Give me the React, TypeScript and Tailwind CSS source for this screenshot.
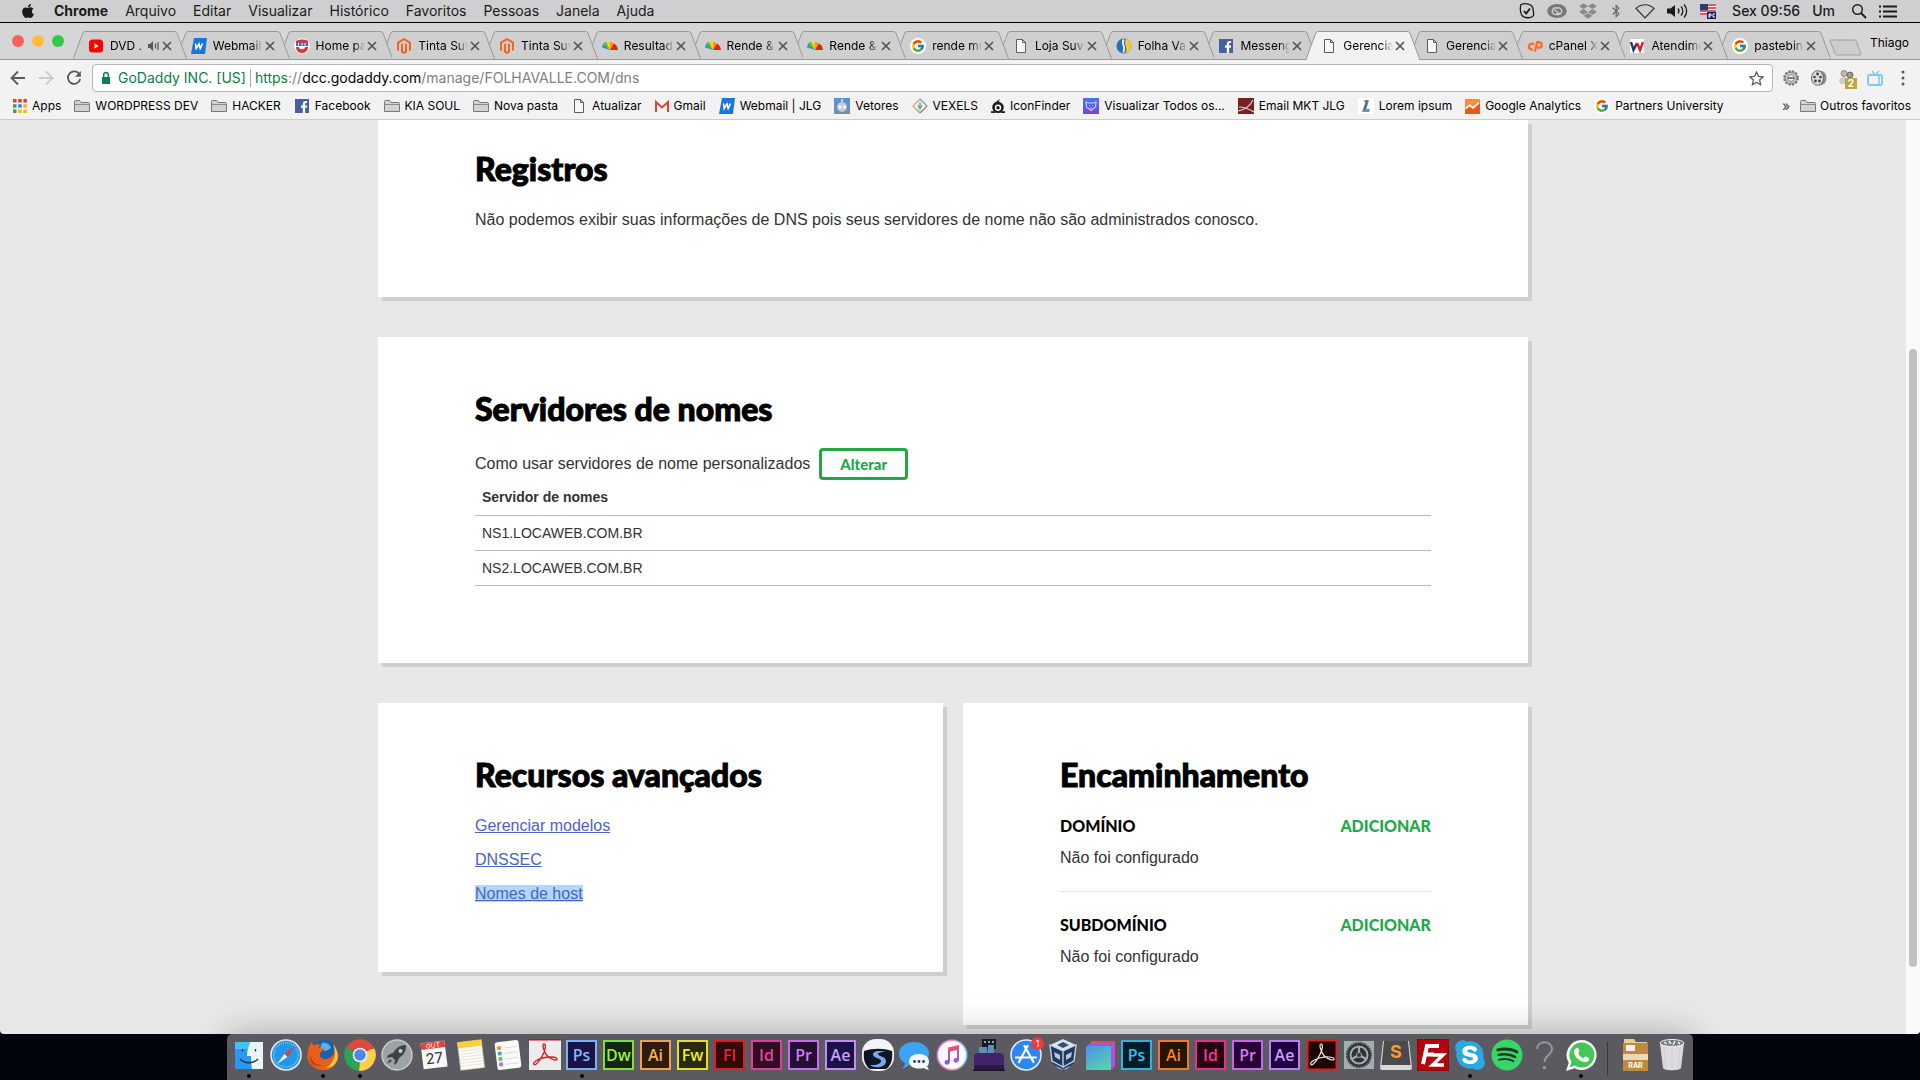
import type { ReactNode } from "react";
import { FaApple, FaBluetoothB, FaDropbox, FaMagento, FaSkype, FaSpotify } from "react-icons/fa";
import { FcGoogle } from "react-icons/fc";

/* ---------- small icons ---------- */

const Svg = ({ children, box = "0 0 16 16", className = "size-4" }: { children: ReactNode; box?: string; className?: string }) => (
  <svg viewBox={box} className={`shrink-0 ${className}`} fill="none" aria-hidden="true">
    {children}
  </svg>
);

const YoutubeIcon = () => (
  <Svg>
    <rect x="1" y="1.500" width="14" height="13" rx="3.500" fill="#f00" />
    <path d="M6.500 5.200v5.600l4-2.800z" fill="#fff" />
  </Svg>
);

const WebmailIcon = () => (
  <Svg>
    <path d="M3 0h13l-2 16H0z" fill="#1c74e0" />
    <path d="m4.500 5.500.7 5L8 6l1.200 4.500 2.300-5" stroke="#fff" strokeWidth="1.600" />
  </Svg>
);

const ShieldIcon = () => (
  <Svg>
    <circle cx="8" cy="8" r="7.800" fill="#fff" />
    <path d="M2 3c4-2 9-2 12 0v3H2z" fill="#dd2f3f" />
    <path d="M2 4.500h12v3.500H2z" fill="#4b6bb8" />
    <path d="M4.500 5v2.500M8 5v2.500M11 5v2.500" stroke="#fff" />
    <path d="M2 9h3c0 3 6 3 6 0h3c0 4-3 6-6 6s-6-2-6-6z" fill="#e2363f" />
  </Svg>
);

const MagentoIcon = () => <FaMagento className="size-4 shrink-0 text-[#f26322]" />;

const SuvinilIcon = () => (
  <Svg>
    <path d="M8 12 0 9.500c0-2 1-3.500 2.500-4.500z" fill="#1e9bd7" />
    <path d="M8 12 1 6c1-1.500 2.500-2 4-2z" fill="#5bb947" />
    <path d="M8 12 4 4c1.500-.5 3-.5 4 0z" fill="#ffd500" />
    <path d="M8 12V4c2 0 3.500 1 4.500 2.500z" fill="#f7941d" />
    <path d="m8 12 4-6.500c2 1 3.500 3 4 6.500z" fill="#e2231a" />
  </Svg>
);

const GoogleIcon = () => (
  <span className="flex size-4 shrink-0 items-center justify-center rounded-full bg-white">
    <FcGoogle className="size-[14px]" />
  </span>
);

const PageIcon = () => (
  <Svg>
    <path d="M3.500 1.500h6l3 3v10h-9z" fill="#f7f7f7" stroke="#5c5c5c" />
    <path d="M9.500 1.500v3h3" stroke="#5c5c5c" />
  </Svg>
);

const FolhaIcon = () => (
  <Svg>
    <circle cx="8" cy="8" r="7.500" fill="#2c6cb5" />
    <path d="M10 .8a7.500 7.500 0 0 1-1 14.600C13 10 7 8 10 .8z" fill="#f5c63a" />
    <path d="M8 1.500c-4 4 3 7-1 13" stroke="#e9f2fa" strokeWidth="1.800" />
  </Svg>
);

const FacebookIcon = () => (
  <Svg>
    <path d="M1 1h14v14H1z" fill="#4560a0" />
    <path d="M8.800 15V9.700H7V7.600h1.800V6c0-1.900 1.100-2.900 2.800-2.900h1.500v2h-1c-.8 0-1 .4-1 1v1.500h2l-.3 2.100h-1.700V15z" fill="#fff" />
  </Svg>
);

const CpanelIcon = () => (
  <Svg>
    <path d="M7 5.700H4.800a2.900 2.900 0 0 0 0 5.800H6" stroke="#ff6c2c" strokeWidth="2.400" />
    <path d="M7.800 13.500 10.200 4.200h1.800a2.700 2.700 0 0 1 0 5.400h-2" stroke="#ff6c2c" strokeWidth="2.400" />
  </Svg>
);

const WIcon = () => (
  <Svg>
    <path d="M.5.500h15v15H.5z" fill="#fff" stroke="#ccc" />
    <path d="m2 4 2.500 8L8 5" stroke="#24375d" strokeWidth="2.400" />
    <path d="m8 5 3 7 3-8" stroke="#d51f35" strokeWidth="2.400" />
  </Svg>
);

const FolderIcon = () => (
  <Svg>
    <path d="M.5 13.500v-10c0-.6.4-1 1-1h4l1.500 2h7.500c.6 0 1 .4 1 1v8z" fill="#d2d2d2" stroke="#777" />
    <path d="M.5 6.500h15" stroke="#8a8a8a" />
  </Svg>
);

const AppsIcon = () => (
  <Svg className="size-[14px]" box="0 0 14 14">
    <path d="M0 0h3.500v3.500H0zM5.200 0h3.500v3.500H5.200zM10.400 0h3.500v3.500h-3.500z" fill="#e43d30" />
    <path d="M0 5.200h3.500v3.500H0z" fill="#2fa84f" />
    <path d="M5.200 5.200h3.500v3.500H5.200z" fill="#3b7ded" />
    <path d="M10.400 5.200h3.500v3.500h-3.500zM5.200 10.400h3.500V14H5.200zM10.400 10.400h3.500V14h-3.500z" fill="#f6b820" />
    <path d="M0 10.400h3.500V14H0z" fill="#2fa84f" />
  </Svg>
);

const GmailIcon = () => (
  <Svg className="h-4 w-[14px]" box="1 0 14 16">
    <path d="M1 3h14v11H1z" fill="#f4f4f4" />
    <path d="M2 14V4l6 5.500L14 4v10" stroke="#dc4437" strokeWidth="2" />
  </Svg>
);

const VetoresIcon = () => (
  <Svg>
    <path d="M0 0h16v16H0z" fill="#5a93cf" />
    <path d="M0 12h16v4H0z" fill="#7d8d99" />
    <circle cx="8" cy="9" r="5" fill="#c4cbd3" />
    <circle cx="6" cy="9" r="1.500" fill="#fff" />
    <circle cx="10.500" cy="9" r="1.500" fill="#fff" />
    <path d="M8 1v3" stroke="#dfe6ee" strokeWidth="1.500" />
  </Svg>
);

const VexelsIcon = () => (
  <Svg>
    <path d="M8 1 1 8l3 3" stroke="#e99c6e" strokeWidth="1.300" />
    <path d="m8 1 7 7" stroke="#8a9aa5" strokeWidth="1.300" />
    <path d="m15 8-7 7" stroke="#d9605a" strokeWidth="1.300" />
    <path d="m8 15-4-4" stroke="#4fb99f" strokeWidth="1.300" />
    <path d="M8 4v5M6 7l2 4 2-4" stroke="#58a894" strokeWidth="1.300" />
  </Svg>
);

const IconFinderIcon = () => (
  <Svg className="size-[14px]">
    <path d="m10 0-1 3c4 1 6 4 5.500 7.500C14 14 11 16 8 16s-6-2-6.500-5.500C1 7 3 4 6 3z" fill="#1d1d1d" />
    <circle cx="8" cy="10" r="3.600" fill="#fff" />
    <circle cx="8" cy="10" r="2" fill="#1d1d1d" />
    <path d="M0 14.500c2 1 3 1 5 0M16 14.500c-2 1-3 1-5 0" stroke="#1d1d1d" strokeWidth="2" />
  </Svg>
);

const BearIcon = () => (
  <Svg>
    <defs>
      <linearGradient id="bear" x1="0" y1="0" x2="0" y2="1">
        <stop stopColor="#3c79f0" />
        <stop offset="1" stopColor="#7a42d8" />
      </linearGradient>
    </defs>
    <path d="M0 0h16v16H0z" fill="url(#bear)" />
    <path d="m3 4 2.500 1h5L13 4l-.5 5L8 12.500 3.500 9z" stroke="#c6d0fb" strokeWidth="1.200" />
    <path d="M6 7.500h.5M9.500 7.500h.5M8 9.500v1" stroke="#fff" strokeWidth="1.200" />
  </Svg>
);

const MktIcon = () => (
  <Svg>
    <path d="M0 0h16v16H0z" fill="#7c1f22" />
    <path d="M0 13c6-1 12-5 15-11M1 9c4 0 10 2 15 5" stroke="#e6d4d4" strokeWidth="1.100" />
  </Svg>
);

const LoremIcon = () => (
  <Svg>
    <path d="M0 0h16v16H0z" fill="#fff" />
    <path d="M8 2h3L8.500 11H12l-.8 3H4z" fill="#6e93b4" />
    <path d="M6 3h3L6.500 12" stroke="#33536f" />
  </Svg>
);

const AnalyticsIcon = () => (
  <Svg className="size-[15px]">
    <path d="M0 0h16v16H0z" fill="#f4912a" />
    <path d="M0 12 4.500 8l3 2.500L16 3v13H0z" fill="#e8571f" />
    <path d="m1 10 4-3.500 3.500 3L15 4" stroke="#fff" strokeWidth="1.800" />
  </Svg>
);

/* ---------- browser ---------- */

const tabs: { title: string; icon: ReactNode; active?: boolean; audio?: boolean }[] = [
  { title: "DVD .", icon: <YoutubeIcon />, audio: true },
  { title: "Webmail", icon: <WebmailIcon /> },
  { title: "Home pa", icon: <ShieldIcon /> },
  { title: "Tinta Suv", icon: <MagentoIcon /> },
  { title: "Tinta Suv", icon: <MagentoIcon /> },
  { title: "Resultad", icon: <SuvinilIcon /> },
  { title: "Rende &", icon: <SuvinilIcon /> },
  { title: "Rende &", icon: <SuvinilIcon /> },
  { title: "rende mu", icon: <GoogleIcon /> },
  { title: "Loja Suvi", icon: <PageIcon /> },
  { title: "Folha Val", icon: <FolhaIcon /> },
  { title: "Messeng", icon: <FacebookIcon /> },
  { title: "Gerencia", icon: <PageIcon />, active: true },
  { title: "Gerencia", icon: <PageIcon /> },
  { title: "cPanel X", icon: <CpanelIcon /> },
  { title: "Atendime", icon: <WIcon /> },
  { title: "pastebin", icon: <GoogleIcon /> },
];

const bookmarks: { label: string; icon: ReactNode }[] = [
  { label: "Apps", icon: <AppsIcon /> },
  { label: "WORDPRESS DEV", icon: <FolderIcon /> },
  { label: "HACKER", icon: <FolderIcon /> },
  { label: "Facebook", icon: <FacebookIcon /> },
  { label: "KIA SOUL", icon: <FolderIcon /> },
  { label: "Nova pasta", icon: <FolderIcon /> },
  { label: "Atualizar", icon: <PageIcon /> },
  { label: "Gmail", icon: <GmailIcon /> },
  { label: "Webmail | JLG", icon: <WebmailIcon /> },
  { label: "Vetores", icon: <VetoresIcon /> },
  { label: "VEXELS", icon: <VexelsIcon /> },
  { label: "IconFinder", icon: <IconFinderIcon /> },
  { label: "Visualizar Todos os...", icon: <BearIcon /> },
  { label: "Email MKT JLG", icon: <MktIcon /> },
  { label: "Lorem ipsum", icon: <LoremIcon /> },
  { label: "Google Analytics", icon: <AnalyticsIcon /> },
  { label: "Partners University", icon: <GoogleIcon /> },
];

function MenuBar() {
  return (
    <header className="flex h-[23px] shrink-0 items-center border-b border-black bg-[#cfcfd1] pr-[23px] pl-5 text-sm text-[#1a1a1a]">
      <FaApple className="size-4" />
      <nav className="ml-[18px] flex gap-[17px]">
        <button className="font-bold">Chrome</button>
        {["Arquivo", "Editar", "Visualizar", "Histórico", "Favoritos", "Pessoas", "Janela", "Ajuda"].map((m) => (
          <button key={m}>{m}</button>
        ))}
      </nav>
      <div className="ml-auto flex items-center gap-3">
        <Svg>
          <path d="M2 1.500c4-1.500 11-1 12 4 0 2 1 4 .5 7-2 3-9 3-11.500 0C1 10 1 4 2 1.500z" stroke="#1a1a1a" strokeWidth="1.300" />
          <path d="m5 8 2.200 2.500L11 5.500" stroke="#1a1a1a" strokeWidth="1.800" />
        </Svg>
        <Svg box="0 0 20 16" className="h-4 w-5">
          <ellipse cx="10" cy="8" rx="9.800" ry="7" fill="#77777a" />
          <path d="M11 10.500a3.300 3.300 0 1 1-.5-5M9 10.500a3.300 3.300 0 1 0 .5-5M7 6.500l6 4.500" stroke="#cfcfd1" strokeWidth="1.300" />
        </Svg>
        <FaDropbox className="size-[18px] text-[#8a8a8c]" />
        <FaBluetoothB className="size-[14px] text-[#666669]" />
        <Svg box="0 0 20 16" className="h-4 w-5">
          <path d="M1 5.500C6 .5 14 .5 19 5.500l-9 9.500z" stroke="#333" strokeWidth="1.200" />
        </Svg>
        <Svg box="0 0 21 16" className="h-4 w-[21px]">
          <path d="M0 5.500h3.500L8 2v12l-4.500-3.500H0z" fill="#1a1a1a" />
          <path d="M11 5.500c1.200 1.500 1.200 3.500 0 5M14 3.500c2.400 2.500 2.400 6.500 0 9M17 1.500c3.500 3.500 3.500 9.500 0 13" stroke="#1a1a1a" strokeWidth="1.300" />
        </Svg>
        <Svg box="0 0 16 16">
          <path d="M0 1h16v11H0z" fill="#fff" />
          <path d="M0 2h16M0 5h16M0 8h16M0 11h16" stroke="#c0283a" strokeWidth="1.600" />
          <path d="M0 1h8v6H0z" fill="#2b3a72" />
          <path d="M7 9h9v7H7z" fill="#14205c" />
          <path d="M9 15v-4h2v2H9M15 11h-2v3h2" stroke="#fff" />
        </Svg>
        <span className="ml-1 font-medium">Sex 09:56</span>
        <span className="font-medium">Um</span>
        <Svg className="ml-1 size-4">
          <circle cx="6.500" cy="6.500" r="4.800" stroke="#1a1a1a" strokeWidth="1.400" />
          <path d="m10 10 5 5" stroke="#1a1a1a" strokeWidth="1.800" />
        </Svg>
        <Svg box="0 0 18 16" className="h-4 w-[18px]">
          <path d="M4 3.500h14M4 8.500h14M4 13.500h14M0 3.500h2M0 8.500h2M0 13.500h2" stroke="#1a1a1a" strokeWidth="1.800" />
        </Svg>
      </div>
    </header>
  );
}

function TabStrip() {
  return (
    <div className="relative flex h-[37px] shrink-0 items-end bg-[#d6d6d6] pr-[11px]">
      <div className="absolute inset-x-0 bottom-0 h-px bg-[#999]" />
      <div className="mb-[13px] flex w-[73px] shrink-0 gap-2 pl-3">
        <span className="size-3 rounded-full bg-[#fc605c]" />
        <span className="size-3 rounded-full bg-[#fdbc40]" />
        <span className="size-3 rounded-full bg-[#34c84a]" />
      </div>
      <div className="relative flex min-w-0 flex-1 pr-[9px]">
        {tabs.map((tab, i) => (
          <div key={i} className="relative h-[29px] min-w-0 flex-1" style={{ zIndex: tab.active ? 30 : 20 - i }}>
            <svg className="absolute top-0 left-0 h-full w-[calc(100%+11px)]" viewBox="0 0 114 29" preserveAspectRatio="none">
              <path d="M0 28.500 10 1.500 12 .5h90l2 1 10 27" fill={tab.active ? "#f2f2f2" : "#cfcfcf"} stroke="#999" />
              {tab.active ? <path d="M1 28.500h112" stroke="#f2f2f2" /> : <path d="M0 28.500h114" stroke="#999" />}
            </svg>
            <div className="relative flex h-full items-center pl-[15px]">
              {tab.icon}
              <span className="ml-[6px] flex min-w-0 flex-1 overflow-hidden [mask-image:linear-gradient(to_right,#000_78%,transparent)]">
                <span className="whitespace-nowrap">{tab.title}</span>
              </span>
              {tab.audio && (
                <Svg className="size-3" box="0 0 12 12">
                  <path d="M0 4h2L5 1v10L2 8H0z" fill="#555" />
                  <path d="M7.500 3.500v5M10 2v8" stroke="#555" strokeWidth="1.200" />
                </Svg>
              )}
              <button className="mr-1 ml-[2px] shrink-0" aria-label="Fechar guia">
                <Svg className="size-[10px]" box="0 0 10 10">
                  <path d="m1 1 8 8M9 1 1 9" stroke="#555" strokeWidth="1.700" />
                </Svg>
              </button>
            </div>
          </div>
        ))}
      </div>
      <button className="relative mb-1 shrink-0" aria-label="Nova guia">
        <Svg box="0 0 33 17" className="h-[17px] w-[33px]">
          <path d="M1.500 1h24c1 0 1.500.5 2 1.500L32 15c0 .7-.4 1-1 1H8c-1 0-1.600-.5-2-1.500L1 2c0-.6 0-1 .5-1z" fill="#cdcdcd" stroke="#a0a0a0" />
        </Svg>
      </button>
      <button className="mb-[9px] ml-2 shrink-0">Thiago</button>
    </div>
  );
}

function Toolbar() {
  return (
    <div className="flex h-9 shrink-0 items-center bg-[#f2f2f2] pr-[9px] pl-[10px]">
      <button aria-label="Voltar">
        <Svg>
          <path d="M15 8H2M8 1.500 1.500 8 8 14.500" stroke="#5a5a5a" strokeWidth="1.800" />
        </Svg>
      </button>
      <button aria-label="Avançar" className="ml-3">
        <Svg>
          <path d="M1 8h13M8 1.500 14.500 8 8 14.500" stroke="#ccc" strokeWidth="1.800" />
        </Svg>
      </button>
      <button aria-label="Recarregar" className="ml-3">
        <Svg>
          <path d="M13.500 4.500A6.200 6.200 0 1 0 14.200 9" stroke="#5a5a5a" strokeWidth="1.800" />
          <path d="M14.800 1v5.800H9z" fill="#5a5a5a" />
        </Svg>
      </button>
      <div className="ml-[10px] flex h-7 flex-1 items-center rounded-sm border border-[#b5b5b5] bg-white px-2 text-sm">
        <Svg className="h-[14px] w-[10px]" box="0 0 10 14">
          <path d="M1 6h8v7H1z" fill="#0b8043" />
          <path d="M2.700 6V3.800a2.300 2.300 0 0 1 4.600 0V6" stroke="#0b8043" strokeWidth="1.400" />
        </Svg>
        <span className="ml-[7px] shrink-0 text-[#0b8043]">GoDaddy INC. [US]</span>
        <span className="mx-1 h-[18px] w-px bg-[#aaa]" />
        <p className="flex-1 text-[#808080]">
          <span className="text-[#0b8043]">https</span>://<span className="text-black">dcc.godaddy.com</span>/manage/FOLHAVALLE.COM/dns
        </p>
        <Svg className="size-[15px]">
          <path d="m8 1 2.100 4.700 5 .5-3.800 3.400 1.100 5L8 12l-4.400 2.600 1.100-5L.9 6.200l5-.5z" stroke="#5a5a5a" strokeWidth="1.300" />
        </Svg>
      </div>
      <div className="ml-[10px] flex items-center gap-3">
        <Svg>
          <circle cx="8" cy="8" r="6.300" stroke="#777" strokeWidth="3" strokeDasharray="2 1.300" />
          <circle cx="8" cy="8" r="6" fill="#c9c9c9" stroke="#777" />
          <circle cx="8" cy="8" r="3.500" fill="#eee" stroke="#888" />
          <path d="M5 8h6" stroke="#555" strokeWidth="1.500" />
        </Svg>
        <Svg>
          <ellipse cx="9.500" cy="8" rx="6" ry="7.300" fill="#8b8b8b" />
          <ellipse cx="6.500" cy="8" rx="6" ry="7.300" fill="#dcdcdc" stroke="#666" />
          <g fill="#444">
            <circle cx="6.500" cy="4" r="1.400" />
            <circle cx="3.500" cy="7" r="1.300" />
            <circle cx="9.500" cy="7" r="1.300" />
            <circle cx="4.500" cy="11" r="1.400" />
            <circle cx="8.500" cy="11" r="1.400" />
          </g>
        </Svg>
        <div className="relative">
          <Svg>
            <circle cx="5" cy="3.500" r="3" fill="#bbb" stroke="#888" />
            <circle cx="11" cy="5" r="3" fill="#999" stroke="#666" />
            <path d="M0 11c0-5 8-5 9 0v3H2z" fill="#ccc" />
          </Svg>
          <span className="absolute top-2 left-[6px] flex h-[11px] w-3 items-center justify-center bg-[#c0a540] text-[10px] font-bold text-white">2</span>
        </div>
        <Svg>
          <rect x="1" y="5" width="14" height="10" rx="1.500" stroke="#7ec8ea" strokeWidth="1.800" />
          <path d="m5 1 3 4 4-4M12 6v8" stroke="#7ec8ea" strokeWidth="1.400" />
        </Svg>
        <button aria-label="Menu">
          <Svg>
            <path d="M8 2h.01M8 8h.01M8 14h.01" stroke="#5a5a5a" strokeWidth="3" strokeLinecap="round" />
          </Svg>
        </button>
      </div>
    </div>
  );
}

function BookmarksBar() {
  return (
    <nav className="flex h-6 shrink-0 items-start border-b border-[#cbcbcb] bg-[#f2f2f2] pr-[9px] pl-[13px] leading-5">
      <div className="flex gap-[13px]">
        {bookmarks.map((b) => (
          <a key={b.label} href="#" className="flex items-center gap-[5px] whitespace-nowrap">
            {b.icon}
            {b.label}
          </a>
        ))}
      </div>
      <button className="ml-auto text-sm leading-5 text-[#444]" aria-label="Mais favoritos">
        »
      </button>
      <a href="#" className="ml-[10px] flex items-center gap-1">
        <FolderIcon />
        Outros favoritos
      </a>
    </nav>
  );
}

/* ---------- page ---------- */

const Card = ({ title, className = "", children }: { title: string; className?: string; children: ReactNode }) => (
  <section className={`bg-white px-[97px] shadow-[4px_4px_0_#cfcfcf] ${className}`}>
    <h2 className="font-['Lato'] text-[32px] leading-10 font-black text-black [-webkit-text-stroke:1px_#000]">{title}</h2>
    {children}
  </section>
);

const Forwarding = ({ label }: { label: string }) => (
  <div>
    <div className="flex justify-between font-['Lato'] text-base leading-6 font-black text-black">
      <h3>{label}</h3>
      <button className="text-[#22a74a]">ADICIONAR</button>
    </div>
    <p className="mt-2 leading-6">Não foi configurado</p>
  </div>
);

function Page() {
  return (
    <div className="flex min-h-0 flex-1 overflow-hidden rounded-b bg-[#e8e8e8]">
      <main className="min-w-0 flex-1 font-['Liberation_Sans'] text-base text-[#333]">
        <div className="mx-auto flex max-w-[1150px] flex-col gap-10">
          <Card title="Registros" className="pt-[29px] pb-[65px]">
            <p className="mt-[19px] leading-6">
              Não podemos exibir suas informações de DNS pois seus servidores de nome não são administrados conosco.
            </p>
          </Card>

          <Card title="Servidores de nomes" className="pt-[52px] pb-[77px]">
            <div className="mt-[19px] flex items-center gap-[9px]">
              <p>Como usar servidores de nome personalizados</p>
              <button className="h-8 rounded-sm border-3 border-[#22a745] px-[18px] font-['Lato'] text-[15px] leading-5 font-black text-[#22a745]">
                Alterar
              </button>
            </div>
            <table className="w-full text-left text-sm">
              <thead>
                <tr className="h-[35px] border-b border-[#bbb]">
                  <th className="px-[7px]">Servidor de nomes</th>
                </tr>
              </thead>
              <tbody>
                {["NS1.LOCAWEB.COM.BR", "NS2.LOCAWEB.COM.BR"].map((ns) => (
                  <tr key={ns} className="h-[35px] border-b border-[#bbb]">
                    <td className="px-[7px]">{ns}</td>
                  </tr>
                ))}
              </tbody>
            </table>
          </Card>

          <div className="grid grid-cols-2 items-start gap-5">
            <Card title="Recursos avançados" className="pt-[52px] pb-[66px]">
              <ul className="mt-[19px] flex flex-col gap-[10px] leading-6 text-[#4a63c4] underline">
                <li>
                  <a href="#">Gerenciar modelos</a>
                </li>
                <li>
                  <a href="#">DNSSEC</a>
                </li>
                <li>
                  <a href="#" className="bg-[#b3d6fd]">
                    Nomes de host
                  </a>
                </li>
              </ul>
            </Card>
            <Card title="Encaminhamento" className="pt-[52px] pb-14">
              <div className="mt-[19px] flex flex-col">
                <Forwarding label="DOMÍNIO" />
                <hr className="my-[21px] border-[#e4e4e4]" />
                <Forwarding label="SUBDOMÍNIO" />
              </div>
            </Card>
          </div>
        </div>
      </main>
      <div className="w-[14px] shrink-0 bg-[#fafafa] px-[3px] pt-[229px]">
        <div className="h-[618px] rounded-full bg-[#c1c1c1]" />
      </div>
    </div>
  );
}

/* ---------- dock ---------- */

const DockSvg = ({ children }: { children: ReactNode }) => (
  <Svg box="0 0 32 32" className="size-8">
    {children}
  </Svg>
);

const Finder = () => (
  <DockSvg>
    <path d="M2 3h28v27H2z" fill="#eef3f8" />
    <path d="M2 3h15c-2 5-3 9-3 14h4c0 5 .3 9 1 13H2z" fill="#2a97f3" />
    <path d="M2 3h15c-1 2-2 5-2.300 7H2z" fill="#3cc6f5" />
    <path d="M9.500 10v2.500M22.500 10v2.500" stroke="#1b3550" strokeWidth="1.300" />
    <path d="M7 20c5 5 13 5 18 0" stroke="#1b3550" strokeWidth="1.300" />
  </DockSvg>
);

const Safari = () => (
  <DockSvg>
    <circle cx="16" cy="16" r="15" fill="#2397e8" stroke="#e8e8ea" strokeWidth="1.600" />
    <circle cx="16" cy="16" r="12.300" stroke="#bfe2f8" strokeWidth="1.500" strokeDasharray=".6 1.500" />
    <path d="m25 7-7.500 11-3-3z" fill="#f0382e" />
    <path d="m7 25 10.500-7-3-3z" fill="#f4f4f4" />
  </DockSvg>
);

const Firefox = () => (
  <DockSvg>
    <circle cx="17" cy="14.500" r="13.500" fill="#1f5ea6" />
    <path d="M15 4c5-1 8 2 9 5l-5 3-6-2z" fill="#58b3e6" />
    <path d="M2 8c1-1 1-3 2-5 1 2 2 3 4 3 2-1 4-1 6 0-2 1-2 2-2 3 2 0 4 0 5 1-1 2-3 3-4 4-1 4 2 7 6 6 6-1 9-5 8-11 4 5 5 10 2 15-3 5-8 8-14 7C5 30-1 22 .5 14 1 12 1 10 2 8z" fill="#e8611b" />
    <path d="M26 5c5 6 7 14 2 20-3 3-6 4-9 4 5-3 9-9 9-15 0-3-1-6-2-9z" fill="#fbc63b" />
    <path d="M3 15c1 8 7 12 14 11-5 2-12 1-14-5z" fill="#c9351a" />
  </DockSvg>
);

const Chrome = () => (
  <DockSvg>
    <path d="M16 16 2.300 8.100A16 16 0 0 1 30 8.500z" fill="#dd4b3e" />
    <path d="M16 16 30 8.500A16 16 0 0 1 15 31.900z" fill="#fdcf4c" />
    <path d="m16 16-1 15.900A16 16 0 0 1 2.300 8.100z" fill="#2ba457" />
    <path d="M16 9h14.200" stroke="#dd4b3e" strokeWidth="2" />
    <circle cx="16" cy="16" r="7.300" fill="#f3f3f3" />
    <circle cx="16" cy="16" r="5.800" fill="#4a86ee" />
  </DockSvg>
);

const Launchpad = () => (
  <DockSvg>
    <circle cx="16" cy="16" r="15" fill="#9ba3a7" stroke="#c8ced1" strokeWidth="1.400" />
    <path d="M25 6c-6 0-10 3-13 8l-5 2-1 3 5-1 3 3-1 5 3-2 2-5c5-3 7-7 7-13z" fill="#3e4347" />
    <path d="m9 20-3 5 5-3z" fill="#3e4347" />
    <circle cx="19.500" cy="12" r="2" fill="#c3cacd" />
  </DockSvg>
);

const Calendar = () => (
  <DockSvg>
    <path d="m3 4 23-3 4 25-22 4z" fill="#77787c" />
    <g transform="rotate(-7 16 16)">
      <path d="M4 3h24v26H4z" fill="#fafafa" />
      <path d="M4 3h24v6.500H4z" fill="#e8413b" />
      <text x="16" y="8.800" fontSize="6.500" textAnchor="middle" fill="#fff">
        OUT
      </text>
      <text x="16" y="24.500" fontSize="15" textAnchor="middle" fill="#333">
        27
      </text>
    </g>
  </DockSvg>
);

const Notes = () => (
  <DockSvg>
    <g transform="rotate(-7 16 16)">
      <path d="M4 2h24v28H4z" fill="#fcfbf4" stroke="#d8c98c" strokeWidth=".6" />
      <path d="M4 2h24v6H4z" fill="#fbcf3b" />
      <path d="M4 11h24M4 14h24M4 17h24M4 20h24M4 23h24M4 26h24" stroke="#ddd" strokeWidth=".7" />
    </g>
  </DockSvg>
);

const Reminders = () => (
  <DockSvg>
    <g transform="rotate(-7 16 16)">
      <rect x="4" y="2" width="24" height="28" rx="2.500" fill="#fafafa" />
      <path d="M12 8.500h14M12 14h14M12 19.500h14M12 25h14" stroke="#ddd" />
      <circle cx="8" cy="8" r="2.100" fill="#f78c26" />
      <circle cx="8" cy="13.500" r="2.100" fill="#35a6ee" />
      <circle cx="8" cy="19" r="2.100" fill="#5bd043" />
      <circle cx="8" cy="24.500" r="2.100" fill="#bd6ee0" />
    </g>
  </DockSvg>
);

const acrobat = "M15 5c2.500 0 1.500 6-1.500 11.500S6.500 27 5 25.500s2.500-5 8.500-6.500 14-1.500 14.500.8-5 1.200-9-2.300S12.500 5 15 5z";

const AcrobatOld = () => (
  <DockSvg>
    <path d="M0 1h32v30H0z" fill="#ececec" />
    <path d="M0 0h32v1.500H0z" fill="#d3101a" />
    <path d={acrobat} stroke="#dc1f26" strokeWidth="1.400" />
  </DockSvg>
);

const AcrobatDC = () => (
  <DockSvg>
    <path d="M1.500 1.500h29v29h-29z" fill="#1e0604" stroke="#dc1f1f" strokeWidth="2" />
    <path d={acrobat} stroke="#f0e8e8" strokeWidth="1.200" />
  </DockSvg>
);

const Adobe = ({ label, colors }: { label: string; colors: string }) => (
  <span className={`flex h-[30px] w-[31px] items-center justify-center border-2 font-['Open_Sans'] text-base leading-4 font-semibold ${colors}`}>
    {label}
  </span>
);

const SDrive = () => (
  <DockSvg>
    <rect x="0" y="0" width="32" height="32" rx="14" fill="#f3f3f5" />
    <path d="M2 12c9-3 19-3 28 0 1 8-1 15-6 18H8C3 27 1 20 2 12z" fill="#0d1526" />
    <path d="M24 13c-7-2-13-1-13 2.500 0 4 9 3.500 8 7-1 3-7 4-11 3.500 5 4 16 2.500 16-3.500 0-5.500-8-5-8-7.500 0-1.500 4-2 8-2z" fill="#7da5e8" />
  </DockSvg>
);

const Messages = () => (
  <DockSvg>
    <path d="M15 3c8 0 15 4.500 15 11.500S23 26 15 26c-2 0-4 0-5-.500C8 28 5 30 3 29c2-1 3-3 3-5-4-2-6-5-6-9.500C0 7.500 7 3 15 3z" fill="#3ba4f4" />
    <path d="M20 15c6 0 10 3 10 7.500 0 2-1 4-2 5l2 3c-2 0-4-.5-5-1.500-8 2-15-1-15-6.500 0-4.500 4-7.500 10-7.500z" fill="#f5f8fb" />
    <g fill="#2c3e66">
      <circle cx="15.500" cy="22.500" r="1.400" />
      <circle cx="20" cy="22.500" r="1.400" />
      <circle cx="24.500" cy="22.500" r="1.400" />
    </g>
  </DockSvg>
);

const Itunes = () => (
  <DockSvg>
    <defs>
      <linearGradient id="note" x1="0" y1="0" x2="0" y2="1">
        <stop stopColor="#fb4b6a" />
        <stop offset="1" stopColor="#7b62ee" />
      </linearGradient>
      <linearGradient id="ring" x1="0" y1="0" x2="1" y2="0">
        <stop stopColor="#cf6fe8" />
        <stop offset=".5" stopColor="#f98aa0" />
        <stop offset="1" stopColor="#5fc6f2" />
      </linearGradient>
    </defs>
    <circle cx="16" cy="16" r="14.800" fill="#fafafc" stroke="url(#ring)" strokeWidth="1.600" />
    <path d="M12 8.500 23 6v14.500c0 4-5.500 4-5.500 1 0-2 2-2.700 3.500-2.700V11l-7 1.500v10c0 4-5.500 4-5.500 1 0-2 2-2.700 3.500-2.700z" fill="url(#note)" />
  </DockSvg>
);

const Toaster = () => (
  <DockSvg>
    <path d="M9 0h14v10H9z" fill="#17191f" />
    <path d="M11 2h2v2h-2zM15 2h2v2h-2zM19 2h2v2h-2z" fill="#8fa4c8" />
    <path d="M6 8h8v6H6zM15 6h6v8h-6z" fill="#5f8fb8" />
    <path d="m23 11 7-2 1 4-6 2z" fill="#4d5d6b" />
    <path d="M1 18c0-3 2-4 5-4h20c3 0 5 1 5 4v13H1z" fill="#43246b" />
    <path d="M1 26h30v5H1z" fill="#2b174a" />
    <path d="M0 30.500h32V32H0z" fill="#16131c" />
  </DockSvg>
);

const AppStore = () => (
  <DockSvg>
    <circle cx="16" cy="16" r="15" fill="#2b86ee" stroke="#dfeaf4" strokeWidth="1.600" />
    <path d="M17.500 7 9 23M14.500 7l9 16M6 18.500h20" stroke="#fff" strokeWidth="2.200" strokeLinecap="round" />
  </DockSvg>
);

const VBox = () => (
  <DockSvg>
    <path d="m16 0 13 6-2 18-11 8L5 24 3 6z" fill="#203a5e" />
    <path d="m16 0 13 6-13 6L3 6z" fill="#dbe4ee" />
    <path d="m16 3 6 3-6 3-6-3z" fill="#31507a" />
    <path d="m3 6 13 6v16L5 22zM29 6l-13 6v16l11-6z" stroke="#ccd8e6" strokeWidth="1.300" />
    <path d="m7 13 6 3v5l-5-3zM25 13l-6 3v5l5-3z" fill="#b9c8da" />
    <path d="M9 27c2 5 12 5 14 0l-7 3z" fill="#8fa5c0" />
  </DockSvg>
);

const Layers = () => (
  <DockSvg>
    <defs>
      <linearGradient id="layer" x1="0" y1="0" x2=".6" y2="1">
        <stop stopColor="#4a90ea" />
        <stop offset="1" stopColor="#55d0b0" />
      </linearGradient>
    </defs>
    <path d="M7 2h24v24H7z" fill="#e64a4a" />
    <path d="M6 4h25v24H6z" fill="#d63fd8" />
    <path d="M4 5h25v25H4z" fill="#8a5cf0" />
    <path d="M2 7h25v24H2z" fill="url(#layer)" />
  </DockSvg>
);

const Prefs = () => (
  <DockSvg>
    <path d="M1 2h30v28H1z" fill="#9fb0b5" />
    <circle cx="16" cy="16" r="12" fill="#2f3133" stroke="#44474a" strokeWidth="2.500" strokeDasharray="1.500 1" />
    <circle cx="16" cy="16" r="8.500" stroke="#a7abad" strokeWidth="2" />
    <path d="M16 16V8M16 16l7 4M16 16l-7 4" stroke="#a7abad" strokeWidth="2.200" />
    <circle cx="16" cy="16" r="2.500" fill="#2f3133" stroke="#a7abad" />
  </DockSvg>
);

const Sublime = () => (
  <DockSvg>
    <path d="M3 2h26l3 27c0 1-1 2-2 2H2c-1 0-2-1-2-2z" fill="#d9d9d9" />
    <path d="M4 2h24l2.500 24h-29z" fill="#4b4b4b" />
    <text x="16" y="19" fontSize="18" fontWeight="bold" textAnchor="middle" fill="#fb9a2c">
      S
    </text>
  </DockSvg>
);

const FileZilla = () => (
  <DockSvg>
    <path d="M0 0h32v32H0z" fill="#b4040c" stroke="#6d0207" strokeWidth="1.500" strokeDasharray="2 1.500" />
    <path d="M6 25 10 7h12M9 15.500h8" stroke="#fff" strokeWidth="4" />
    <path d="M16 16h10L15.500 26H27" stroke="#fff" strokeWidth="3.400" />
  </DockSvg>
);

const Question = () => (
  <DockSvg>
    <path d="M9 10c0-9 15-9 15 0 0 6-7.500 6-7.500 13" stroke="#97979b" strokeWidth="2" />
    <circle cx="16.500" cy="28.500" r="1.700" fill="#97979b" />
  </DockSvg>
);

const Whatsapp = () => (
  <DockSvg>
    <path d="M16.500 1a15 15 0 1 1-7 28.200L1 32l2.700-8.300A15 15 0 0 1 16.500 1z" fill="#f5f5f5" />
    <path d="M16.500 3.500a12.500 12.500 0 1 1-6.500 23l-5.300 1.700L6.500 23A12.500 12.500 0 0 1 16.500 3.500z" fill="#45c655" />
    <path d="M11.500 9c1.200-.6 1.800 0 2.500 1.800.6 1.500.5 2-.8 3.400 1.200 2.500 2.800 4 5.300 5 1.200-1.500 1.800-2 3-1.400 2.800 1.300 3 1.600 2.600 2.700-1 2.700-4 3.200-7 2-4-1.600-6.800-4.500-8-8-.9-2.300.5-4.500 2.400-5.500z" fill="#fff" />
  </DockSvg>
);

const Rar = () => (
  <DockSvg>
    <path d="M5 0h10l2 3h11v28H5z" fill="#e6cf96" />
    <path d="M4 4h25v28H4z" fill="#c08a3c" />
    <path d="M4 15h25v6H4z" fill="#ead9b5" />
    <path d="M7 6h9v6H7z" fill="#f6f2ea" />
    <text x="16.500" y="29" fontSize="7" fontWeight="bold" textAnchor="middle" fill="#fff">
      RAR
    </text>
  </DockSvg>
);

const Trash = () => (
  <DockSvg>
    <path d="m4 4 3 25c1 3 17 3 18 0l3-25z" fill="#dcdcde" />
    <path d="m8 9 2 19M16 10v19M24 9l-2 19" stroke="#cfcfd2" />
    <ellipse cx="16" cy="4" rx="12" ry="3.500" fill="#77777a" stroke="#f1f1f1" />
    <path d="m8 3 3 2M13 2l2 3M19 2l-2 4M22 3l2 2" stroke="#f7f7f7" strokeWidth="1.500" />
    <path d="M12 5h2M20 5h2" stroke="#4aa" strokeWidth="1.500" />
  </DockSvg>
);

const dock: { name: string; icon: ReactNode; running?: boolean; badge?: number }[] = [
  { name: "Finder", icon: <Finder />, running: true },
  { name: "Safari", icon: <Safari /> },
  { name: "Firefox", icon: <Firefox />, running: true },
  { name: "Chrome", icon: <Chrome />, running: true },
  { name: "Launchpad", icon: <Launchpad /> },
  { name: "Calendário", icon: <Calendar /> },
  { name: "Notas", icon: <Notes /> },
  { name: "Lembretes", icon: <Reminders /> },
  { name: "Acrobat", icon: <AcrobatOld /> },
  { name: "Photoshop CS6", icon: <Adobe label="Ps" colors="border-[#79b4f2] bg-[#1a1145] text-[#7fb8f8]" />, running: true },
  { name: "Dreamweaver CS6", icon: <Adobe label="Dw" colors="border-[#86dd3a] bg-[#12260d] text-[#9bef3c]" /> },
  { name: "Illustrator CS6", icon: <Adobe label="Ai" colors="border-[#f2a243] bg-[#2e1c10] text-[#f9b055]" /> },
  { name: "Fireworks CS6", icon: <Adobe label="Fw" colors="border-[#dfe02c] bg-[#2a2a12] text-[#ecec34]" /> },
  { name: "Flash CS6", icon: <Adobe label="Fl" colors="border-[#dd1c24] bg-[#300b0c] text-[#ee2128]" /> },
  { name: "InDesign CS6", icon: <Adobe label="Id" colors="border-[#de3f9b] bg-[#2f0e22] text-[#e843a4]" /> },
  { name: "Premiere CS6", icon: <Adobe label="Pr" colors="border-[#c66af0] bg-[#241030] text-[#cf7af5]" /> },
  { name: "After Effects CS6", icon: <Adobe label="Ae" colors="border-[#bd90ee] bg-[#1c1146] text-[#c9a0fb]" /> },
  { name: "Drive", icon: <SDrive /> },
  { name: "Mensagens", icon: <Messages /> },
  { name: "iTunes", icon: <Itunes /> },
  { name: "Toast", icon: <Toaster /> },
  { name: "App Store", icon: <AppStore />, badge: 1 },
  { name: "VirtualBox", icon: <VBox /> },
  { name: "Camadas", icon: <Layers /> },
  { name: "Photoshop", icon: <Adobe label="Ps" colors="border-[#2cb5dc] bg-[#001d27] text-[#32c3ec]" /> },
  { name: "Illustrator", icon: <Adobe label="Ai" colors="border-[#ec7a22] bg-[#261300] text-[#fb7f24]" /> },
  { name: "InDesign", icon: <Adobe label="Id" colors="border-[#dc3385] bg-[#260011] text-[#f23a94]" /> },
  { name: "Premiere", icon: <Adobe label="Pr" colors="border-[#c468e6] bg-[#290034] text-[#d678f8]" /> },
  { name: "After Effects", icon: <Adobe label="Ae" colors="border-[#b585e6] bg-[#1f0040] text-[#cb9bfb]" /> },
  { name: "Acrobat DC", icon: <AcrobatDC /> },
  { name: "Preferências", icon: <Prefs /> },
  { name: "Sublime Text", icon: <Sublime /> },
  { name: "FileZilla", icon: <FileZilla /> },
  {
    name: "Skype",
    icon: (
      <span className="flex size-8 items-center justify-center rounded-full bg-white bg-clip-content p-1">
        <FaSkype className="-m-1 size-[34px] shrink-0 text-[#2ba8e4]" />
      </span>
    ),
    running: true,
  },
  {
    name: "Spotify",
    icon: (
      <span className="flex size-8 items-center justify-center rounded-full bg-[#1c3a26] bg-clip-content p-1">
        <FaSpotify className="-m-1 size-8 shrink-0 text-[#38d668]" />
      </span>
    ),
  },
  { name: "Ajuda", icon: <Question /> },
  { name: "WhatsApp", icon: <Whatsapp />, running: true },
];

const DockItem = ({ name, icon, running, badge }: { name: string; icon: ReactNode; running?: boolean; badge?: number }) => (
  <button aria-label={name} className="relative flex w-[37px] shrink-0 flex-col items-center">
    <span className="flex h-[34px] items-center">{icon}</span>
    {running && <span className="mt-[2px] size-1 rounded-full bg-black" />}
    {badge && (
      <span className="absolute -top-px right-0 flex size-[13px] items-center justify-center rounded-full bg-[#ee3b38] text-[9px] text-white">
        {badge}
      </span>
    )}
  </button>
);

function Dock() {
  return (
    <footer className="flex h-[46px] shrink-0 justify-center bg-[#03050c]">
      <div className="flex items-start rounded-t-[5px] bg-[#5b5a60] px-[3px] pt-1 shadow-[0_0_34px_rgba(0,0,0,0.28)]">
        {dock.map((item) => (
          <DockItem key={item.name} {...item} />
        ))}
        <span className="mx-2 mt-1 h-[34px] w-px bg-[#38373c]" />
        <DockItem name="Arquivos" icon={<Rar />} />
        <DockItem name="Lixo" icon={<Trash />} />
      </div>
    </footer>
  );
}

export default function App() {
  return (
    <div className="flex h-screen flex-col overflow-hidden bg-[#03050c] font-['Inter'] text-xs text-black">
      <MenuBar />
      <TabStrip />
      <Toolbar />
      <BookmarksBar />
      <Page />
      <Dock />
    </div>
  );
}
